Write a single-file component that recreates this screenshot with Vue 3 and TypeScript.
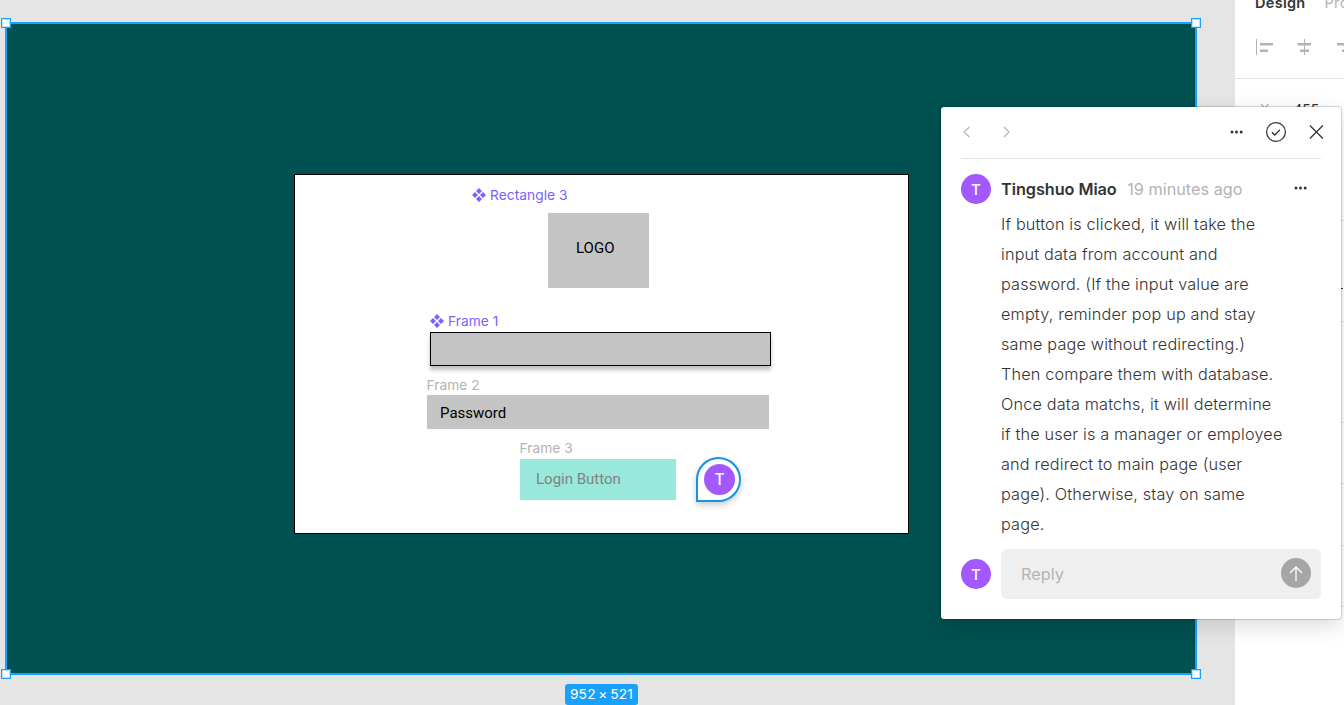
<script setup lang="ts">
const handles: string[] = ['nw', 'ne', 'sw', 'se']
const dividers: number[] = [78, 220, 321, 422, 483, 545, 606]
const lines: string[] = [
  'If button is clicked, it will take the',
  'input data from account and',
  'password. (If the input value are',
  'empty, reminder pop up and stay',
  'same page without redirecting.)',
  'Then compare them with database.',
  'Once data matchs, it will determine',
  'if the user is a manager or employee',
  'and redirect to main page (user',
  'page). Otherwise, stay on same',
  'page.',
]
</script>

<template>
  <div class="editor">
    <main class="canvas">
      <div class="artboard">
        <i v-for="h in handles" :key="h" class="handle" :class="h"></i>
      </div>
      <div class="login-frame"></div>

      <div class="label component rect-label">
        <svg width="14" height="14" viewBox="0 0 14 14"><path d="M7 0 10 3 7 6 4 3zM3 4 6 7 3 10 0 7zM11 4 14 7 11 10 8 7zM7 8 10 11 7 14 4 11z" /></svg>
        <span>Rectangle 3</span>
      </div>
      <div class="logo-box"><span>LOGO</span></div>

      <div class="label component frame1-label">
        <svg width="14" height="14" viewBox="0 0 14 14"><path d="M7 0 10 3 7 6 4 3zM3 4 6 7 3 10 0 7zM11 4 14 7 11 10 8 7zM7 8 10 11 7 14 4 11z" /></svg>
        <span>Frame 1</span>
      </div>
      <div class="account-field"></div>

      <div class="label frame2-label">Frame 2</div>
      <div class="password-field"><span>Password</span></div>

      <div class="label frame3-label">Frame 3</div>
      <div class="login-button"><span>Login Button</span></div>

      <div class="pin"><span class="pin-avatar">T</span></div>
      <div class="size-badge">952 × 521</div>
    </main>

    <aside class="panel">
      <div class="tabs"><b>Design</b><span>Prototype</span></div>
      <svg class="align" width="110" height="20" viewBox="0 0 110 20">
        <path d="M22.500 2v16M70.500 2v16" fill="none" stroke="#b3b3b3" />
        <path d="M26 6h13v2.500H26zM26 12.500h8V15H26zM63.500 6H77v2.500H63.500zM66 12.500h9V15h-9zM103 6h7v2.500h-7zM108 12.500h2V15h-2z" fill="#b3b3b3" />
      </svg>
      <div class="position"><span>X</span><em>455</em></div>
      <i v-for="y in dividers" :key="y" class="divider" :style="{ top: y + 'px' }"></i>
      <i class="fragment"></i>
    </aside>

    <section class="thread">
      <header class="toolbar">
        <svg width="360" height="50" viewBox="0 0 360 50" fill="none">
          <path d="m8.500 20-5.500 5 5.500 5M43 20l5 5-5 5" stroke="#b3b3b3" stroke-width="1.150" />
          <g fill="#333"><circle cx="271" cy="25" r="1.500" /><circle cx="275.500" cy="25" r="1.500" /><circle cx="280.200" cy="25" r="1.500" /></g>
          <circle cx="315" cy="25" r="9.400" stroke="#333" stroke-width="1.250" />
          <path d="m311 25.300 2.800 2.700 5.200-5.300M349 18.500l13 13M362 18.500l-13 13" transform="translate(-.1)" stroke="#333" stroke-width="1.250" />
        </svg>
      </header>
      <article class="comment">
        <span class="avatar">T</span>
        <div class="content">
          <div class="meta">
            <strong>Tingshuo Miao</strong><time>19 minutes ago</time>
            <svg width="16" height="6" viewBox="0 0 16 6" fill="#333"><circle cx="3" cy="2" r="1.500" /><circle cx="7.500" cy="2" r="1.500" /><circle cx="12.200" cy="2" r="1.500" /></svg>
          </div>
          <p><span v-for="line in lines" :key="line">{{ line }}</span></p>
        </div>
      </article>
      <footer class="reply">
        <span class="avatar">T</span>
        <div class="reply-box">
          <span>Reply</span>
          <svg width="30" height="30" viewBox="0 0 30 30"><circle cx="15" cy="15" r="15" fill="#a6a6a6" /><path d="M15 23V9M9 15l6-6 6 6" fill="none" stroke="#fff" stroke-width="1.300" /></svg>
        </div>
      </footer>
    </section>
  </div>
</template>

<style>
body { margin: 0; overflow: hidden; }
</style>

<style scoped>
.editor {
  position: relative;
  display: flex;
  width: 1344px;
  height: 705px;
  overflow: hidden;
  font-family: Inter, "Liberation Sans", sans-serif;
  font-size: 13.75px;
  white-space: nowrap;
}
.editor * { box-sizing: border-box; }
.canvas { position: relative; width: 1235px; background: #e5e5e5; }
.canvas > * { position: absolute; }
.artboard { left: 5px; top: 22px; width: 1192px; height: 653px; background: #005151; border: 2px solid #18a0fb; }
.handle { position: absolute; width: 10px; height: 10px; border: 1px solid #18a0fb; background: #fff; box-shadow: inset 0 0 0 1px #b9e1fe; }
.nw { left: -6px; top: -6px; }
.ne { right: -6px; top: -6px; }
.sw { left: -6px; bottom: -6px; }
.se { right: -6px; bottom: -6px; }
.login-frame { left: 294px; top: 174px; width: 615px; height: 360px; background: #fff; border: 1px solid #000; }
.label { display: flex; align-items: center; height: 20px; line-height: 20px; color: #b3b3b3; letter-spacing: .05px; }
.component { color: #7b61ff; gap: 4px; }
.component svg { fill: currentColor; }
.rect-label { left: 472px; top: 185px; }
.frame1-label { left: 430px; top: 311px; }
.frame2-label { left: 426.500px; top: 375px; }
.frame3-label { left: 519.500px; top: 438px; }
.logo-box { left: 548px; top: 213px; width: 101px; height: 75px; padding: 25px 28px; line-height: 20px; background: #c4c4c4; font-family: Roboto, sans-serif; font-size: 15px; }
.account-field { left: 430px; top: 332px; width: 341px; height: 34px; background: #c4c4c4; border: 1px solid #000; box-shadow: 0 4px 4px rgba(0, 0, 0, .25); }
.password-field { left: 427px; top: 395px; width: 342px; height: 34px; padding-left: 13px; line-height: 36px; background: #c4c4c4; font-family: Roboto, sans-serif; font-size: 15px; }
.login-button { left: 520px; top: 459px; width: 156px; height: 41px; padding-left: 16px; line-height: 41px; background: #98e8db; color: #828282; font-family: Roboto, sans-serif; font-size: 15px; }
.pin { left: 696px; top: 457px; width: 45px; height: 45px; padding: 5px 6px; border: 2px solid #1593e6; border-radius: 50% 50% 50% 0; background: #fff; box-shadow: 0 3px 6px rgba(0, 0, 0, .2); }
.pin-avatar { display: flex; align-items: center; justify-content: center; width: 31px; height: 31px; border-radius: 50%; background: #a259ff; color: #fff; font-size: 15.500px; font-weight: 500; }
.size-badge { left: 565px; top: 684px; width: 73px; height: 21px; border-radius: 3px; background: #18a0fb; color: #fff; text-align: center; line-height: 20px; word-spacing: -1.500px; letter-spacing: .2px; }
.panel { position: relative; width: 109px; overflow: hidden; background: #fff; color: #b3b3b3; }
.tabs { display: flex; gap: 19px; height: 37px; padding-left: 20px; line-height: 20px; margin-top: -7px; font-size: 14.500px; letter-spacing: .3px; }
.tabs b { color: #333; font-weight: 600; }
.align { display: block; margin-top: 7px; margin-left: -1px; }
.position { display: flex; gap: 24px; padding-left: 25px; margin-top: 42px; line-height: 20px; }
.position em { font-style: normal; color: #333; }
.divider { position: absolute; left: 0; right: 0; height: 1px; background: #e5e5e5; }
.fragment { position: absolute; left: 106px; top: 288px; width: 2px; height: 1px; background: #333; }
.thread { position: absolute; left: 941px; top: 107px; width: 400px; height: 512px; padding: 0 20px; border-radius: 3px; background: #fff; box-shadow: 0 0 0 1px rgba(0, 0, 0, .15), 0 6px 21px rgba(0, 0, 0, .15); color: #333; }
.toolbar { height: 52px; border-bottom: 1px solid #e5e5e5; }
.toolbar svg { display: block; overflow: visible; }
.comment { display: flex; gap: 10px; height: 390px; padding-top: 15px; }
.avatar { display: flex; flex: none; align-items: center; justify-content: center; width: 30px; height: 30px; border-radius: 50%; background: #a259ff; color: #fff; font-size: 15px; font-weight: 500; }
.content { flex: 1; }
.meta { display: flex; align-items: center; height: 30px; font-size: 16.250px; }
.meta strong { font-weight: 600; letter-spacing: -.05px; }
.meta time { margin-left: 10.500px; color: #b3b3b3; }
.meta svg { margin-left: auto; margin-right: 12px; }
p { margin: 5px 0 0; font-size: 16.250px; font-weight: 300; letter-spacing: .16px; line-height: 30px; }
p span { display: block; }
.reply { display: flex; align-items: center; gap: 10px; height: 50px; }
.reply-box { display: flex; flex: 1; align-items: center; justify-content: space-between; height: 50px; padding: 0 10px 2px 20px; border-radius: 6px; background: #efefef; color: #b3b3b3; font-size: 16.250px; }
.reply-box span { padding-top: 2px; }
</style>
